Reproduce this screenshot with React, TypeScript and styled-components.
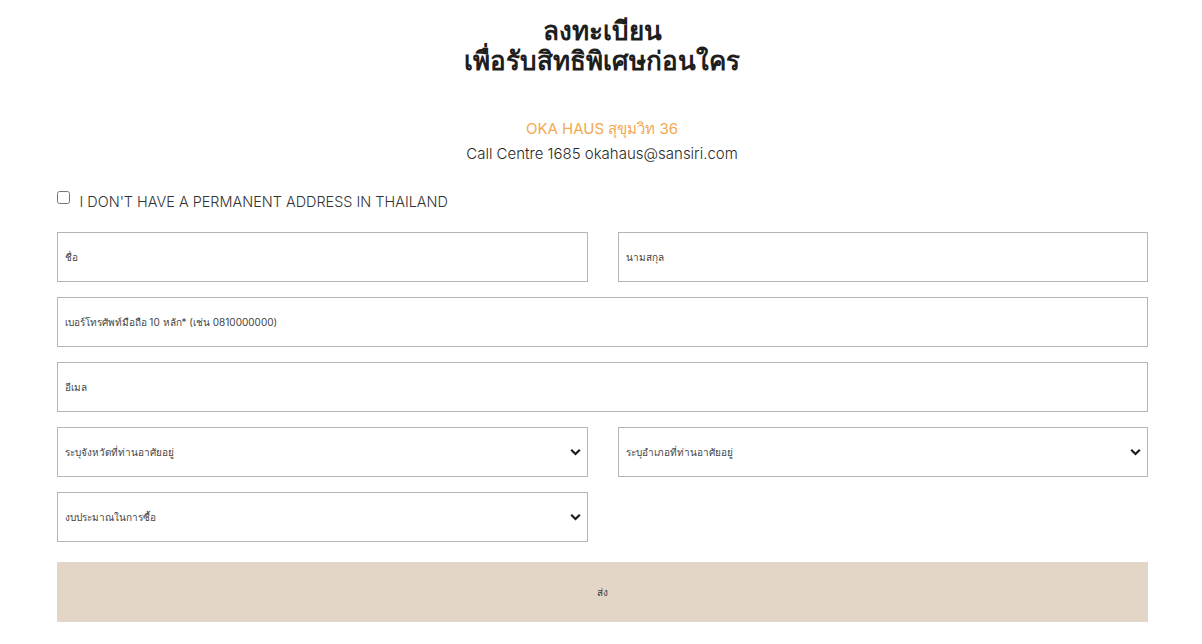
import React from "react";
import styled, { createGlobalStyle } from "styled-components";

const GlobalStyle = createGlobalStyle`
  body {
    margin: 0;
    background: #fff;
    font-family: "Inter", "Noto Sans", sans-serif;
    color: #222;
  }
`;

const Page = styled.div`
  width: 1091px;
  margin: 0 auto;
  padding: 16px 0 22px;
  transform: translateX(1px);
`;

const Title = styled.h1`
  margin: 0;
  text-align: center;
  font-size: 26px;
  line-height: 30px;
  font-weight: 700;
  color: #1e1e1e;
`;

const Project = styled.div`
  margin-top: 40px;
  text-align: center;
  font-size: 15px;
  line-height: 25px;
  color: #f2a950;
`;

const Contact = styled.div`
  text-align: center;
  font-size: 15px;
  line-height: 25px;
  font-weight: 300;
  color: #2a2a2a;
`;

const CheckRow = styled.label`
  display: flex;
  align-items: center;
  gap: 10px;
  margin-top: 27px;
  font-size: 14.45px;
  font-weight: 300;
  color: #333;
  text-transform: uppercase;
`;

const Box = styled.input`
  margin: 0;
  width: 13px;
  height: 13px;
  position: relative;
  top: -4px;
`;

const Form = styled.form`
  display: grid;
  grid-template-columns: 531px 530px;
  column-gap: 30px;
  row-gap: 15px;
  margin-top: 22px;
`;

const Field = styled.div<{ $wide?: boolean }>`
  grid-column: ${(p) => (p.$wide ? "1 / -1" : "auto")};
  height: 50px;
  box-sizing: border-box;
  border: 1px solid #b5b5b5;
  display: flex;
  align-items: center;
  justify-content: space-between;
  padding: 0 6px 0 7px;
  font-size: 10px;
  color: #444;
`;

const Chevron = styled.svg`
  width: 11px;
  height: 8px;
`;

const Submit = styled.button`
  grid-column: 1 / -1;
  margin-top: 5px;
  height: 60px;
  border: none;
  background: #e3d6c7;
  font-family: inherit;
  font-size: 10px;
  color: #3a3a3a;
`;

const Arrow = () => (
  <Chevron viewBox="0 0 11 8">
    <path d="M1.2 1.8 L5.5 6 L9.8 1.8" fill="none" stroke="#1a1a1a" strokeWidth="2.2" />
  </Chevron>
);

export default function App() {
  return (
    <>
      <GlobalStyle />
      <Page>
        <Title>
          ลงทะเบียน
          <br />
          เพื่อรับสิทธิพิเศษก่อนใคร
        </Title>
        <Project>OKA HAUS สุขุมวิท 36</Project>
        <Contact>Call Centre 1685 okahaus@sansiri.com</Contact>
        <CheckRow>
          <Box type="checkbox" />
          I don't have a permanent address in Thailand
        </CheckRow>
        <Form>
          <Field>ชื่อ</Field>
          <Field>นามสกุล</Field>
          <Field $wide>เบอร์โทรศัพท์มือถือ 10 หลัก* (เช่น 0810000000)</Field>
          <Field $wide>อีเมล</Field>
          <Field>
            ระบุจังหวัดที่ท่านอาศัยอยู่
            <Arrow />
          </Field>
          <Field>
            ระบุอำเภอที่ท่านอาศัยอยู่
            <Arrow />
          </Field>
          <Field>
            งบประมาณในการซื้อ
            <Arrow />
          </Field>
          <div />
          <Submit type="button">ส่ง</Submit>
        </Form>
      </Page>
    </>
  );
}
